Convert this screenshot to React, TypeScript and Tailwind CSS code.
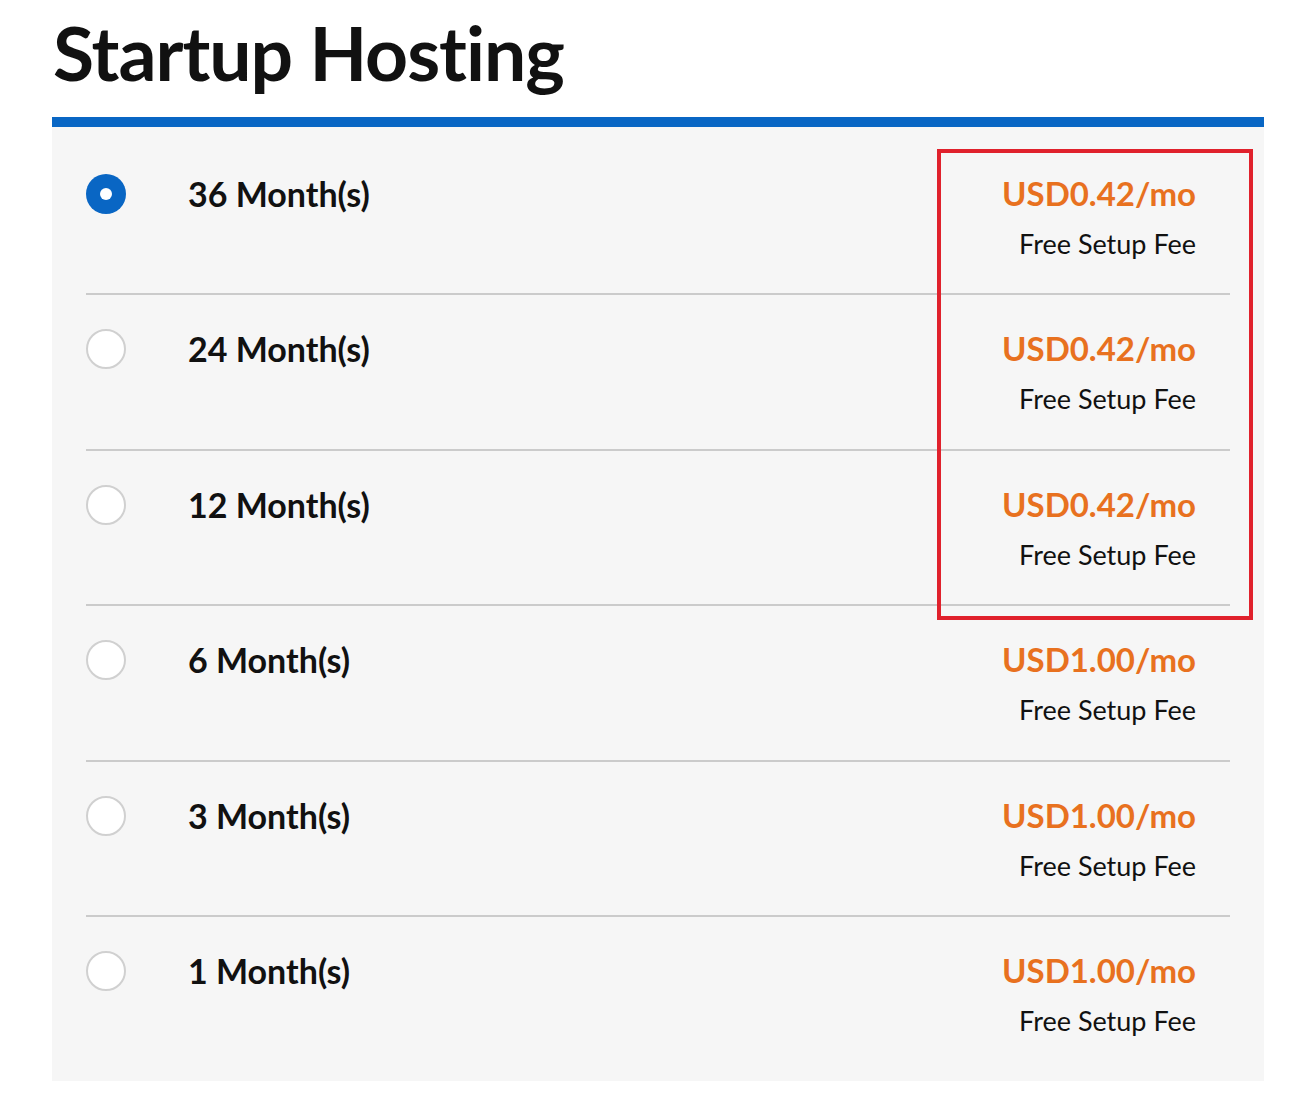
const PLANS: { term: string; price: string; checked?: boolean }[] = [
  { term: "36 Month(s)", price: "USD0.42/mo", checked: true },
  { term: "24 Month(s)", price: "USD0.42/mo" },
  { term: "12 Month(s)", price: "USD0.42/mo" },
  { term: "6 Month(s)", price: "USD1.00/mo" },
  { term: "3 Month(s)", price: "USD1.00/mo" },
  { term: "1 Month(s)", price: "USD1.00/mo" },
];

function Radio({ checked }: { checked?: boolean }) {
  if (checked) {
    return (
      <span className="flex h-10 w-10 shrink-0 items-center justify-center rounded-full bg-[#0966c4]">
        <span className="h-3 w-3 rounded-full bg-white" />
      </span>
    );
  }
  return (
    <span className="h-10 w-10 shrink-0 rounded-full border-2 border-[#d0d0d0] bg-white" />
  );
}

export default function App() {
  return (
    <div
      className="min-h-[1114px] bg-white pl-[52px] text-[#111]"
      style={{ fontFamily: "Lato, 'Open Sans', sans-serif" }}
    >
      <div className="w-[1212px]">
        <h1 className="pt-[7px] pl-px text-[75px] leading-[90px] font-bold tracking-[-1px]">
          Startup Hosting
        </h1>
        <div className="mt-[20px] h-[10px] bg-[#0966c4]" />
        <div className="relative bg-[#f6f6f6] pt-[12.5px] pb-[8.5px]">
          {PLANS.map((plan, i) => (
            <label
              key={plan.term}
              className={`mx-[34px] flex h-[155.5px] items-start border-b-2 pt-[34px] pr-[34px] ${
                i === PLANS.length - 1 ? "border-transparent" : "border-[#cbcbcb]"
              }`}
            >
              <Radio checked={plan.checked} />
              <span className="ml-[62px] text-[34px] leading-[40px] font-bold">
                {plan.term}
              </span>
              <span className="ml-auto flex flex-col items-end">
                <span className="mt-[3px] text-[33px] leading-[32px] font-bold text-[#e8711f]">
                  {plan.price}
                </span>
                <span className="mt-[19px] text-[27px] leading-[31px]">
                  Free Setup Fee
                </span>
              </span>
            </label>
          ))}
          <div className="pointer-events-none absolute top-[22px] left-[885px] h-[471px] w-[316px] border-4 border-[#e0212c]" />
        </div>
      </div>
    </div>
  );
}
